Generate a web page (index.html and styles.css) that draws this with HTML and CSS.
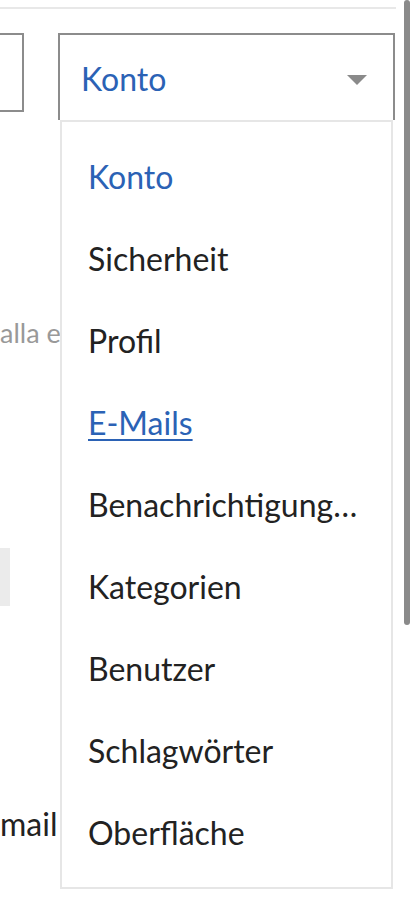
FILE: index.html
```html
<!DOCTYPE html>
<html lang="de">
<head>
<meta charset="utf-8">
<title>Einstellungen</title>
<link rel="stylesheet" href="styles.css">
</head>
<body>
<div class="page">
  <div class="topline"></div>
  <div class="row">
    <div class="input"></div>
    <div class="select">
      <span class="select-value">Konto</span>
      <span class="caret"></span>
      <ul class="menu">
        <li class="item active">Konto</li>
        <li class="item">Sicherheit</li>
        <li class="item">Profil</li>
        <li class="item link">E-Mails</li>
        <li class="item">Benachrichtigung…</li>
        <li class="item">Kategorien</li>
        <li class="item">Benutzer</li>
        <li class="item">Schlagwörter</li>
        <li class="item">Oberfläche</li>
      </ul>
    </div>
  </div>
  <p class="hint">alla e</p>
  <div class="block"></div>
  <p class="label">mail</p>
  <div class="scrollbar"></div>
</div>
</body>
</html>
```

FILE: styles.css
```css
* { box-sizing: border-box; }
html, body { margin: 0; padding: 0; background: #fff; }
body { font-family: Lato, "Noto Sans", sans-serif; color: #222; }
.page { position: relative; width: 416px; height: 911px; overflow: hidden; }
.topline { margin-top: 7px; width: 396px; height: 2px; background: #e8e8e8; }
.row { display: flex; margin-top: 24px; align-items: flex-start; }
.input { width: 100px; height: 79px; margin-left: -76px; border: 2px solid #8c8c8c; flex: none; }
.select { position: relative; margin-left: 34px; width: 337px; height: 87px; border: 2px solid #8c8c8c; border-bottom: none; display: flex; align-items: center; justify-content: space-between; padding: 2px 26px 0 21px; flex: none; }
.select-value { font-size: 32px; color: #2b62b5; line-height: 1; }
.caret { width: 0; height: 0; border-left: 10px solid transparent; border-right: 10px solid transparent; border-top: 10px solid #8a8a8a; margin-top: 2px; }
.menu { position: absolute; top: 100%; left: 0; width: 333px; height: 769px; margin: 0; padding: 13px 0 0 0; list-style: none; background: #fff; border: 2px solid #e6e6e6; z-index: 2; }
.item { height: 82px; display: flex; align-items: center; padding-left: 26px; font-size: 32px; color: #222; white-space: nowrap; }
.item.active { color: #2b62b5; }
.item.link { color: #2b62b5; text-decoration: underline; text-decoration-thickness: 2px; text-underline-offset: 4px; }
.hint { margin: 198px 0 0 0; width: 60px; overflow: hidden; white-space: nowrap; font-size: 27px; line-height: 30px; color: #999; }
.block { margin-top: 200px; width: 10px; height: 58px; background: #ebebeb; }
.label { margin: 200px 0 0 0; font-size: 32px; line-height: 36px; color: #222; }
.scrollbar { position: absolute; top: 0; right: 6px; width: 6px; height: 625px; border-radius: 3px; background: #8a8a8a; z-index: 3; }
```
